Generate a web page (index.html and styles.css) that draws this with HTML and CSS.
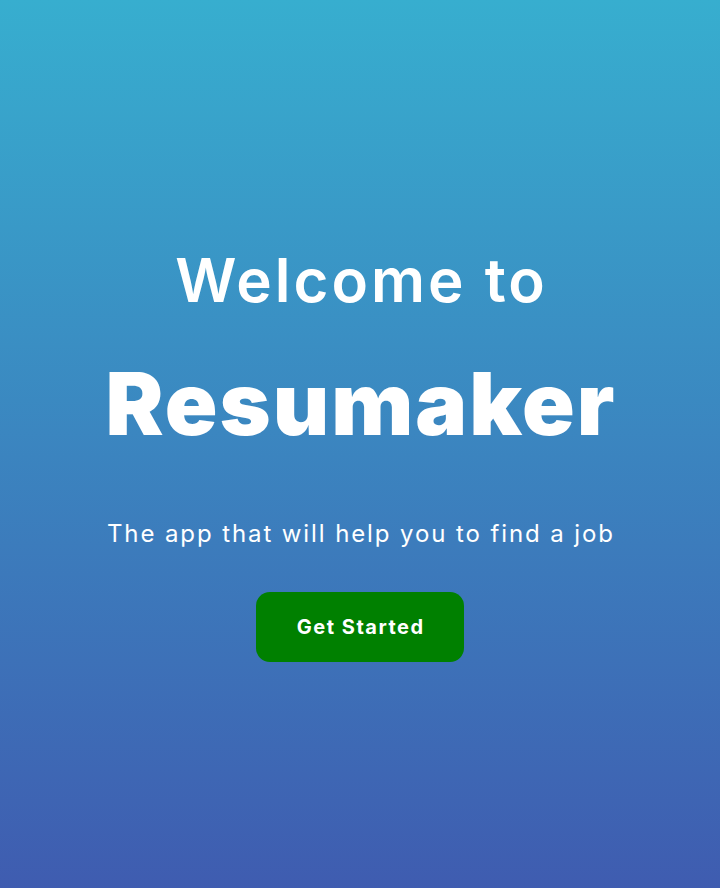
FILE: index.html
```html
<!DOCTYPE html>
<html lang="en">
<head>
<meta charset="utf-8">
<title>Resumaker</title>
<link rel="stylesheet" href="styles.css">
</head>
<body>
<main class="hero">
  <h2 class="welcome">Welcome to</h2>
  <h1 class="brand">Resumaker</h1>
  <p class="tagline">The app that will help you to find a job</p>
  <button class="cta" type="button">Get Started</button>
</main>
</body>
</html>
```

FILE: styles.css
```css
* { box-sizing: border-box; }
html, body { margin: 0; padding: 0; height: 100%; }
body {
  font-family: "Inter", "Open Sans", sans-serif;
  color: #fff;
  background: linear-gradient(180deg, #37aecf 0%, #3f5cb0 100%);
}
.hero {
  height: 888px;
  display: flex;
  flex-direction: column;
  align-items: center;
  padding-top: 244px;
}
.welcome {
  margin: 0;
  font-size: 60px;
  font-weight: 600;
  line-height: 72px;
  letter-spacing: 3px;
  text-indent: 3px;
}
.brand {
  margin: 38px 0 0;
  font-size: 87px;
  font-weight: 900;
  line-height: 100px;
  letter-spacing: 2px;
  text-indent: 2px;
}
.tagline {
  margin: 63px 0 0;
  font-size: 24px;
  font-weight: 400;
  line-height: 34px;
  letter-spacing: 1.9px;
  text-indent: 1.9px;
}
.cta {
  margin-top: 41px;
  width: 208px;
  height: 70px;
  border: none;
  border-radius: 14px;
  background: #008000;
  color: #fff;
  font-family: inherit;
  font-size: 20px;
  font-weight: 700;
  letter-spacing: 1.5px;
  text-indent: 1.5px;
}
```
